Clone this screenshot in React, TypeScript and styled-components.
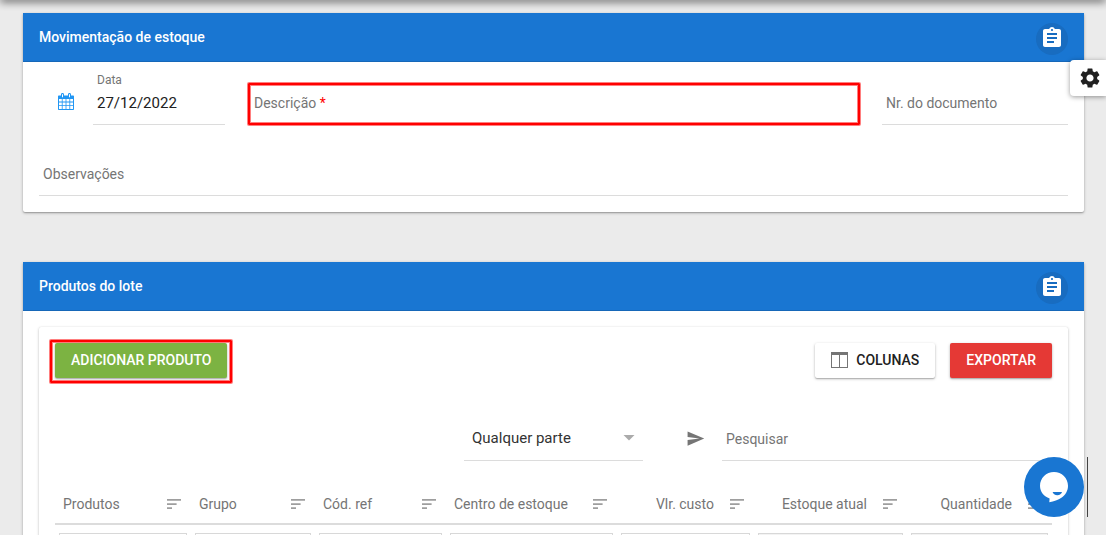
import React from "react";
import styled, { createGlobalStyle, css } from "styled-components";
import { MdAssignment, MdSettings, MdSend } from "react-icons/md";

const GlobalStyle = createGlobalStyle`
  * { box-sizing: border-box; }
  body {
    margin: 0;
    background: #ebebeb;
    color: #212121;
    font-family: Roboto, "Liberation Sans", sans-serif;
    font-size: 14px;
  }
  button, input, select { font: inherit; color: inherit; }
`;

const Shell = styled.div`
  height: 100vh;
  overflow-y: auto;
  overflow-x: hidden;
  scrollbar-width: none;
`;

const TopBarEdge = styled.div`
  position: fixed;
  top: -4px;
  left: 0;
  right: 0;
  height: 4px;
  box-shadow: 0 1px 8px rgba(0, 0, 0, 0.9);
`;

const Page = styled.main`
  display: flex;
  flex-direction: column;
  gap: 50px;
  padding: 13px 22px 24px 23px;
`;

const Card = styled.section`
  background: #fff;
  border-radius: 2px;
  box-shadow: 0 1px 3px rgba(0, 0, 0, 0.3), 0 1px 1px rgba(0, 0, 0, 0.14);
`;

const CardHeader = styled.header`
  display: flex;
  align-items: center;
  justify-content: space-between;
  height: 49px;
  padding: 0 16px;
  background: #1976d2;
  border-bottom: 1px solid #1667b8;
  color: #fff;
`;

const CardTitle = styled.h2`
  margin: 0;
  font-size: 14px;
  line-height: 20px;
  font-weight: 500;
`;

const RoundButton = styled.button`
  display: flex;
  align-items: center;
  justify-content: center;
  width: 32px;
  height: 32px;
  margin-top: 4px;
  padding: 0 0 2px;
  border: 0;
  border-radius: 50%;
  background: #186cc0;
  color: #fff;
`;

const FormBody = styled.form`
  display: flex;
  flex-direction: column;
  gap: 34px;
  padding: 10px 16px 16px;
`;

const FieldRow = styled.div`
  display: flex;
  align-items: flex-end;
`;

const CalendarButton = styled.button`
  display: flex;
  align-items: center;
  justify-content: center;
  flex: none;
  width: 54px;
  height: 48px;
  padding: 0;
  border: 0;
  background: none;
  color: #2196f3;
`;

const DateField = styled.div`
  display: flex;
  flex-direction: column;
  flex: 0 0 132px;
  margin-right: 23px;
`;

const SmallLabel = styled.label`
  padding-left: 4px;
  font-size: 12px;
  line-height: 16px;
  color: #757575;
`;

const LineInput = styled.input`
  display: block;
  width: 100%;
  min-width: 0;
  height: 37px;
  padding: 0 4px 6px;
  border: 0;
  border-bottom: 1px solid #dcdcdc;
  border-radius: 0;
  background: none;
  outline: 0;
  font-size: 15px;
  &::placeholder {
    color: #757575;
    opacity: 1;
    font-size: 14px;
  }
`;

const markedOutline = css`
  border: 2px solid #f00;
  border-radius: 1px;
  box-shadow: 0 0 0 1px rgba(255, 0, 0, 0.5), inset 0 0 0 1px rgba(255, 0, 0, 0.5);
`;

const RequiredField = styled.div`
  display: flex;
  align-items: center;
  flex: 1;
  height: 42px;
  margin-right: 22px;
  padding: 0 4px 2px;
  color: #757575;
  ${markedOutline}
`;

const Star = styled.span`
  color: #f00;
`;

const PlainInput = styled.input`
  flex: 1;
  min-width: 0;
  border: 0;
  outline: 0;
  background: none;
`;

const DocumentField = styled.div`
  flex: 0 0 186px;
`;

const ProductsBody = styled.div`
  padding: 16px;
`;

const Panel = styled.div`
  padding: 16px;
  border-radius: 2px;
  box-shadow: 0 1px 3px rgba(0, 0, 0, 0.24), 0 0 1px rgba(0, 0, 0, 0.12);
`;

const Toolbar = styled.div`
  display: flex;
  align-items: center;
  gap: 15px;
`;

const Spacer = styled.span`
  flex: 1;
`;

const Highlight = styled.div`
  position: relative;
  &::after {
    content: "";
    position: absolute;
    inset: -3px -5px -5px;
    pointer-events: none;
    ${markedOutline}
  }
`;

const tones = {
  green: css`background: #7cb342; color: #fff;`,
  red: css`background: #e53935; color: #fff;`,
  white: css`background: #fff; color: #212121;`,
};

const ActionButton = styled.button<{ $tone: keyof typeof tones }>`
  display: flex;
  align-items: center;
  gap: 8px;
  height: 35px;
  padding: 0 16px 1px;
  border: 0;
  border-radius: 2px;
  font-weight: 500;
  text-transform: uppercase;
  white-space: nowrap;
  box-shadow: 0 1px 3px rgba(0, 0, 0, 0.26), 0 1px 1px rgba(0, 0, 0, 0.16);
  ${({ $tone }) => tones[$tone]}
`;

const SearchRow = styled.div`
  display: flex;
  align-items: flex-end;
  justify-content: flex-end;
  margin-top: 38px;
`;

const SelectBox = styled.div`
  display: flex;
  align-items: center;
  width: 179px;
  height: 37px;
  padding: 0 8px 8px;
  border-bottom: 1px solid #dcdcdc;
`;

const MatchSelect = styled.select`
  flex: 1;
  min-width: 0;
  padding: 0;
  border: 0;
  outline: 0;
  appearance: none;
  background: none;
  color: #333;
  font-size: 15px;
`;

const SendButton = styled.button`
  display: flex;
  align-items: center;
  justify-content: center;
  width: 32px;
  height: 45px;
  margin: 0 11px 0 36px;
  padding: 0;
  border: 0;
  background: none;
  color: #757575;
`;

const SearchField = styled.div`
  flex: 0 0 330px;
`;

const Grid = styled.table`
  width: 100%;
  margin-top: 23px;
  table-layout: fixed;
  border-collapse: separate;
  border-spacing: 0;
  color: #757575;
`;

const HeadCell = styled.th`
  height: 41px;
  padding: 0 8px;
  border-bottom: 2px solid #dcdcdc;
  font-weight: 400;
`;

const HeadContent = styled.div<{ $end?: boolean }>`
  display: flex;
  align-items: center;
  justify-content: ${({ $end }) => ($end ? "flex-end" : "space-between")};
  gap: 14px;
  white-space: nowrap;
`;

const SortButton = styled.button`
  display: flex;
  padding: 0 2px;
  border: 0;
  background: none;
  color: #9e9e9e;
`;

const FilterCell = styled.td`
  padding: 8px 4px;
`;

const FilterInput = styled.input`
  display: block;
  width: 100%;
  height: 32px;
  padding: 0 8px;
  border: 1px solid #d8d8d8;
  outline: 0;
  background: #fff;
  &:disabled {
    background: #f3f3f3;
  }
`;

const SettingsTab = styled.button`
  position: fixed;
  top: 60px;
  right: 0;
  display: flex;
  align-items: center;
  justify-content: center;
  width: 36px;
  height: 36px;
  padding: 0 0 0 4px;
  border: 0;
  border-radius: 4px 0 0 4px;
  background: #fff;
  box-shadow: 0 1px 5px rgba(0, 0, 0, 0.4);
`;

const ChatDock = styled.div`
  position: fixed;
  right: 18px;
  bottom: 18px;
  padding-right: 3px;
  border-right: 1px solid #444;
`;

const ChatButton = styled.button`
  display: flex;
  align-items: center;
  justify-content: center;
  width: 60px;
  height: 60px;
  padding: 0;
  border: 0;
  border-radius: 50%;
  background: #1976d2;
`;

const CalendarIcon = () => (
  <svg width="16" height="17" viewBox="0 0 16 17" aria-hidden="true">
    <path
      fill="currentColor"
      fillRule="evenodd"
      d="M1 2.5h2V1.4C3 .6 3.600 0 4.500 0S6 .6 6 1.400V2.500h4V1.400C10 .6 10.600 0 11.500 0S13 .6 13 1.400V2.500h2c.6 0 1 .4 1 1V16c0 .6-.4 1-1 1H1c-.6 0-1-.4-1-1V3.500c0-.6.4-1 1-1zM4 1.300v2.900h1V1.300zM11 1.300v2.900h1V1.300zM1 6v2.600h2.800V6zM4.600 6v2.600h3V6zM8.400 6v2.600h3V6zM12.200 6v2.600H15V6zM1 9.400v2.800h2.800V9.400zM4.600 9.400v2.800h3V9.400zM8.400 9.400v2.800h3V9.400zM12.200 9.400v2.800H15V9.400zM1 13v3h2.800v-3zM4.600 13v3h3v-3zM8.400 13v3h3v-3zM12.200 13v3H15v-3z"
    />
  </svg>
);

const ColumnsIcon = () => (
  <svg width="17" height="16" viewBox="0 0 17 16" aria-hidden="true">
    <path fill="#757575" fillRule="evenodd" d="M0 0h17v16H0zM1 3v12h7V3zM9 3v12h7V3z" />
  </svg>
);

const SortIcon = () => (
  <svg width="14" height="10" viewBox="0 0 14 10" aria-hidden="true">
    <path fill="currentColor" d="M0 0h14v1.700H0zM0 4.200h9.600v1.700H0zM0 8.300h5v1.700H0z" />
  </svg>
);

const ArrowIcon = () => (
  <svg width="12" height="6" viewBox="0 0 12 6" aria-hidden="true">
    <path fill="#ababab" d="M.5 0h11L6 5.600z" />
  </svg>
);

const ChatIcon = () => (
  <svg width="60" height="60" viewBox="0 0 60 60" aria-hidden="true">
    <path
      fill="#fff"
      d="M30 15c7.800 0 14 6.100 14 13.800 0 5.200-2.600 9.300-6.600 12-3.200 2.100-7.500 3.700-12.100 4.400l.3-3.700C20 39.600 16 35 16 28.800 16 21.100 22.200 15 30 15z"
    />
    <path fill="#1976d2" d="M28.600 35h9.400c-.4 2-2.300 3.200-4.700 3.200S29 37 28.600 35z" />
  </svg>
);

const columns = [
  { title: "Produtos", width: 136 },
  { title: "Grupo", width: 124 },
  { title: "Cód. ref", width: 131 },
  { title: "Centro de estoque", width: 171 },
  { title: "Vlr. custo", width: 137, end: true },
  { title: "Estoque atual", width: 153, end: true, locked: true },
  { title: "Quantidade", width: 145, end: true, locked: true },
];

function SectionHeader({ title }: { title: string }) {
  return (
    <CardHeader>
      <CardTitle>{title}</CardTitle>
      <RoundButton type="button" aria-label={`Detalhes: ${title}`}>
        <MdAssignment size={24} />
      </RoundButton>
    </CardHeader>
  );
}

export default function App() {
  return (
    <>
      <GlobalStyle />
      <Shell>
        <TopBarEdge />
        <Page>
          <Card>
            <SectionHeader title="Movimentação de estoque" />
            <FormBody>
              <FieldRow>
                <CalendarButton type="button" aria-label="Abrir calendário">
                  <CalendarIcon />
                </CalendarButton>
                <DateField>
                  <SmallLabel htmlFor="data">Data</SmallLabel>
                  <LineInput id="data" defaultValue="27/12/2022" />
                </DateField>
                <RequiredField>
                  <label htmlFor="descricao">
                    Descrição <Star>*</Star>
                  </label>
                  <PlainInput id="descricao" required />
                </RequiredField>
                <DocumentField>
                  <LineInput aria-label="Nr. do documento" placeholder="Nr. do documento" />
                </DocumentField>
              </FieldRow>
              <LineInput aria-label="Observações" placeholder="Observações" />
            </FormBody>
          </Card>

          <Card>
            <SectionHeader title="Produtos do lote" />
            <ProductsBody>
              <Panel>
                <Toolbar>
                  <Highlight>
                    <ActionButton type="button" $tone="green">Adicionar produto</ActionButton>
                  </Highlight>
                  <Spacer />
                  <ActionButton type="button" $tone="white">
                    <ColumnsIcon />
                    Colunas
                  </ActionButton>
                  <ActionButton type="button" $tone="red">Exportar</ActionButton>
                </Toolbar>
                <SearchRow>
                  <SelectBox>
                    <MatchSelect aria-label="Tipo de busca">
                      <option>Qualquer parte</option>
                    </MatchSelect>
                    <ArrowIcon />
                  </SelectBox>
                  <SendButton type="button" aria-label="Buscar">
                    <MdSend size={19} />
                  </SendButton>
                  <SearchField>
                    <LineInput aria-label="Pesquisar" placeholder="Pesquisar" />
                  </SearchField>
                </SearchRow>
                <Grid>
                  <colgroup>
                    {columns.map((c) => (
                      <col key={c.title} width={c.width} />
                    ))}
                  </colgroup>
                  <thead>
                    <tr>
                      {columns.map((c) => (
                        <HeadCell key={c.title} scope="col">
                          <HeadContent $end={c.end}>
                            {c.title}
                            <SortButton type="button" aria-label={`Ordenar por ${c.title}`}>
                              <SortIcon />
                            </SortButton>
                          </HeadContent>
                        </HeadCell>
                      ))}
                    </tr>
                  </thead>
                  <tbody>
                    <tr>
                      {columns.map((c) => (
                        <FilterCell key={c.title}>
                          <FilterInput aria-label={`Filtrar ${c.title}`} disabled={c.locked} />
                        </FilterCell>
                      ))}
                    </tr>
                  </tbody>
                </Grid>
              </Panel>
            </ProductsBody>
          </Card>
        </Page>
      </Shell>
      <SettingsTab type="button" aria-label="Configurações">
        <MdSettings size={24} />
      </SettingsTab>
      <ChatDock>
        <ChatButton type="button" aria-label="Abrir chat">
          <ChatIcon />
        </ChatButton>
      </ChatDock>
    </>
  );
}
